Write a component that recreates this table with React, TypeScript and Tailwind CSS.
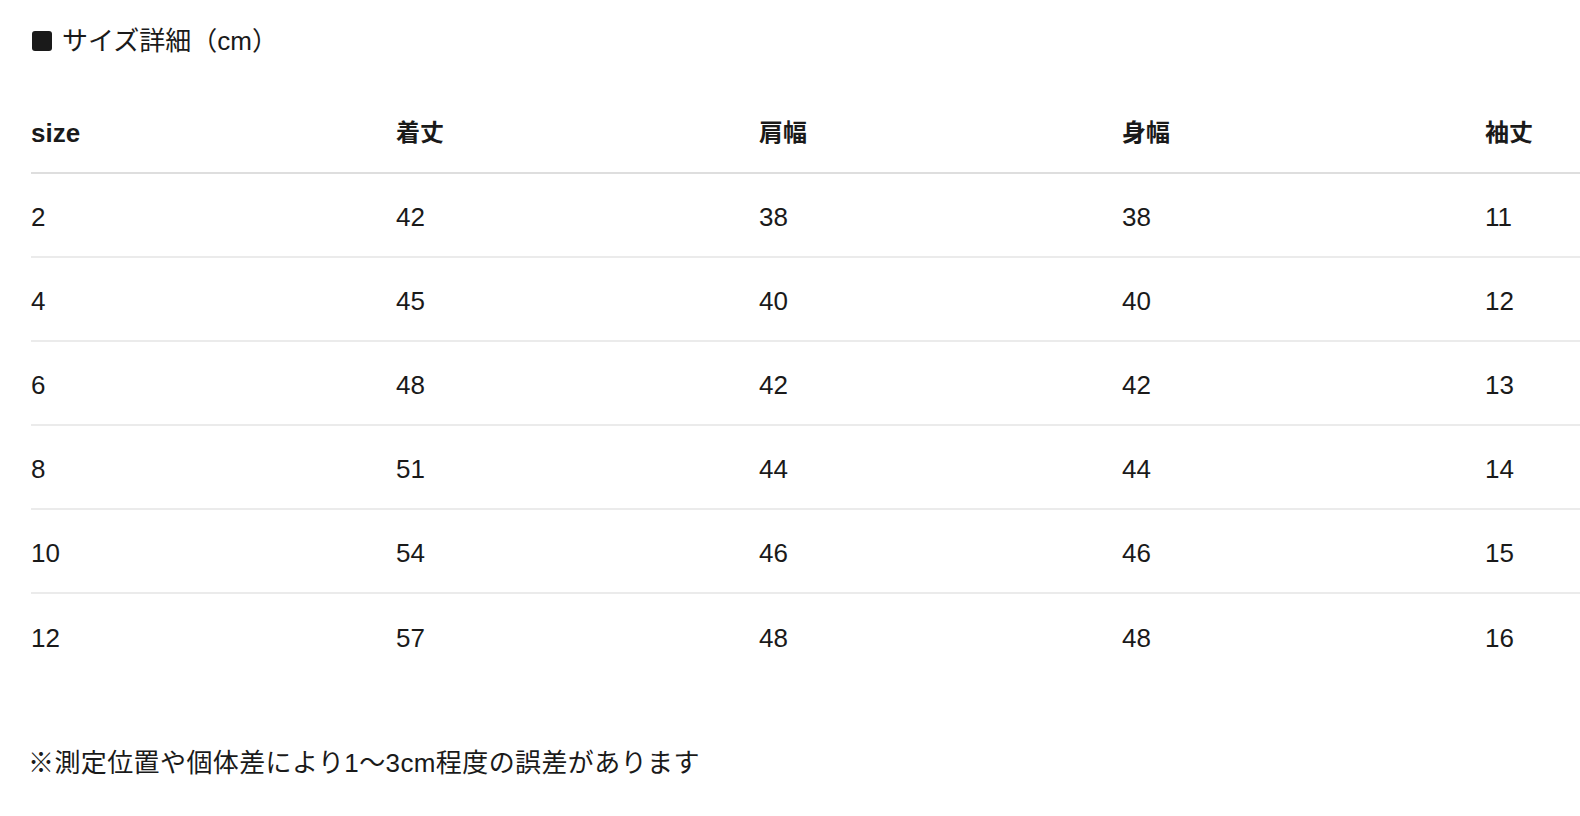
import React from 'react';

const headers = ['size', '着丈', '肩幅', '身幅', '袖丈'];

const rows = [
  ['2', '42', '38', '38', '11'],
  ['4', '45', '40', '40', '12'],
  ['6', '48', '42', '42', '13'],
  ['8', '51', '44', '44', '14'],
  ['10', '54', '46', '46', '15'],
  ['12', '57', '48', '48', '16'],
];

const font = {
  fontFamily: '"Liberation Sans", "Noto Sans CJK JP", sans-serif',
};

export default function App() {
  return (
    <div
      className="w-full h-[816px] overflow-hidden bg-white text-[#1a1a1a] pl-[31px] pt-[23px]"
      style={font}
    >
      {/* Title */}
      <div className="flex items-center h-[36px]">
        <div className="w-[20px] h-[20px] ml-[1px] rounded-[3px] bg-[#1a1a1a]" />
        <h2 className="ml-[10px] text-[26px] leading-[36px] font-normal">サイズ詳細（cm）</h2>
      </div>

      {/* Table */}
      <div className="mt-[33px] w-[1820px]">
        <div className="grid grid-cols-[365px_363px_363px_363px_364px] h-[82px] items-center pt-[2px] border-b-2 border-[#dedede]">
          {headers.map((h, i) => (
            <div
              key={h}
              className={
                'leading-[36px] ' +
                (i === 0 ? 'text-[26px] font-bold' : 'text-[24px] font-semibold')
              }
            >
              {h}
            </div>
          ))}
        </div>
        {rows.map((r, i) => (
          <div
            key={r[0]}
            className={
              'grid grid-cols-[365px_363px_363px_363px_364px] h-[84px] items-center pt-[3px] ' +
              (i < rows.length - 1 ? 'border-b-2 border-[#ebebeb]' : '')
            }
          >
            {r.map((c, j) => (
              <div key={j} className="text-[26px] leading-[36px]">
                {c}
              </div>
            ))}
          </div>
        ))}
      </div>

      {/* Note */}
      <p className="mt-[67px] -ml-[3px] text-[26px] leading-[36px] tracking-[0.4px]">
        ※測定位置や個体差により1〜3cm程度の誤差があります
      </p>
    </div>
  );
}
